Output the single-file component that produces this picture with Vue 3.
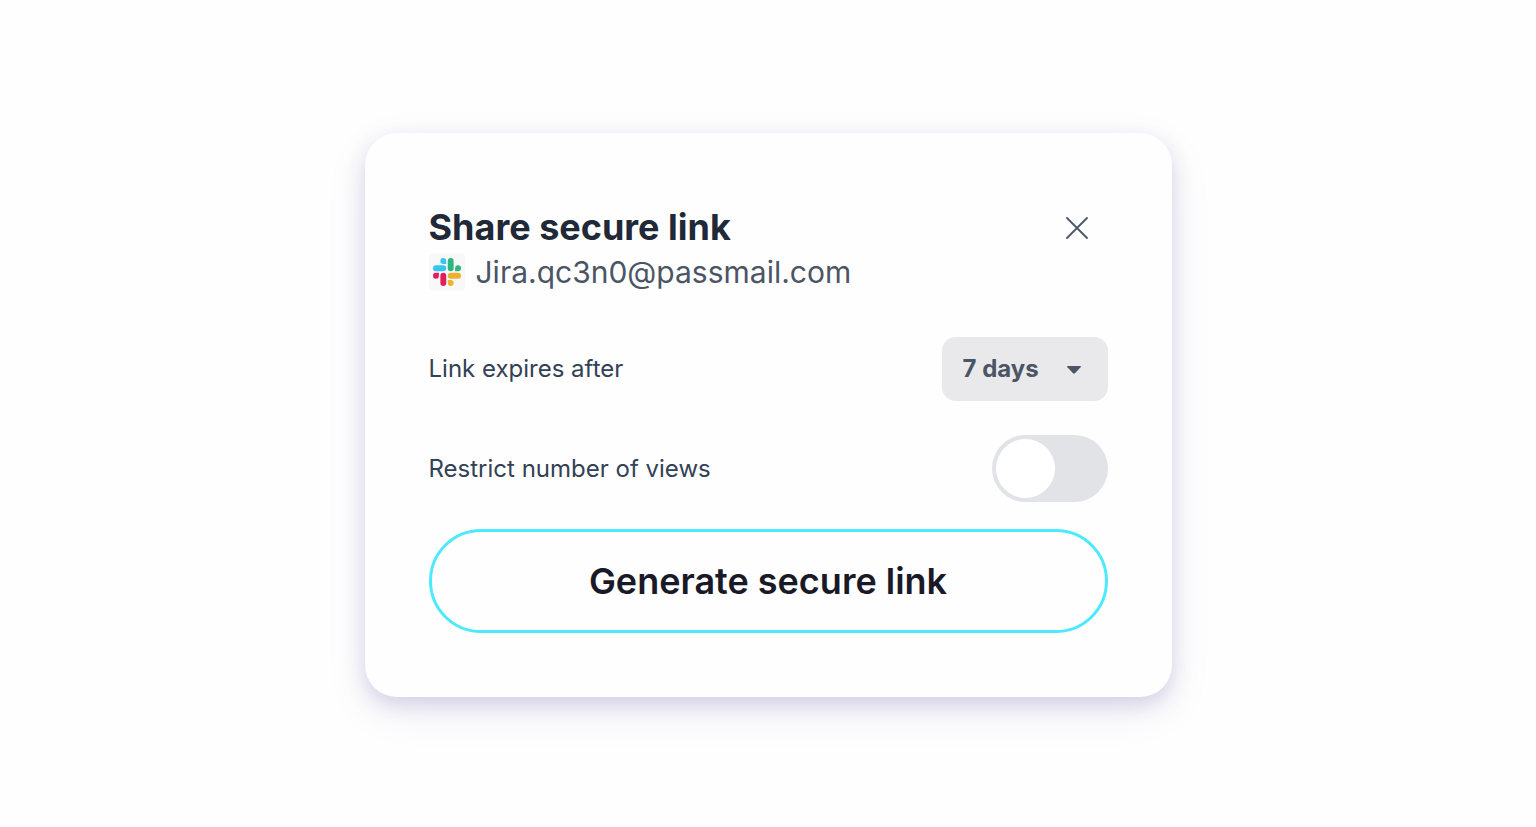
<script setup>
import { ref } from 'vue'
const expiry = ref('7 days')
const restricted = ref(false)
</script>

<template>
  <main class="page">
    <section class="card" aria-labelledby="title">
      <header class="head">
        <div>
          <h1 id="title">Share secure link</h1>
          <p class="account">
            <span class="logo">
              <svg viewBox="0 0 122.8 122.8" width="28" height="28" aria-hidden="true">
                <path fill="#e01e5a" d="M25.8 77.6a12.9 12.9 0 1 1-12.9-12.9h12.9zm6.5 0a12.9 12.9 0 0 1 25.8 0v32.3a12.9 12.9 0 0 1-25.8 0z" />
                <path fill="#36c5f0" d="M45.2 25.8a12.9 12.9 0 1 1 12.9-12.9v12.9zm0 6.5a12.9 12.9 0 0 1 0 25.8H12.9a12.9 12.9 0 0 1 0-25.8z" />
                <path fill="#2eb67d" d="M97 45.2a12.9 12.9 0 1 1 12.9 12.9H97zm-6.5 0a12.9 12.9 0 0 1-25.8 0V12.9a12.9 12.9 0 0 1 25.8 0z" />
                <path fill="#ecb22e" d="M77.6 97a12.9 12.9 0 1 1-12.9 12.9V97zm0-6.5a12.9 12.9 0 0 1 0-25.8h32.3a12.9 12.9 0 0 1 0 25.8z" />
              </svg>
            </span>
            <span>Jira.qc3n0@passmail.com</span>
          </p>
        </div>
        <button class="close" type="button" aria-label="Close">
          <svg viewBox="0 0 22 22" width="22" height="22" aria-hidden="true">
            <path d="M1 1 21 21M21 1 1 21" fill="none" stroke="#4b5565" stroke-width="1.8" stroke-linecap="round" />
          </svg>
        </button>
      </header>

      <div class="row expiry">
        <label for="expiry">Link expires after</label>
        <div class="picker">
          <select id="expiry" v-model="expiry">
            <option>7 days</option>
          </select>
          <svg class="caret" viewBox="0 0 14 8" width="14" height="8" aria-hidden="true">
            <path d="M.8 0h12.4q1.2.3.4 1.2L8.2 7q-1.2 1.1-2.4 0L.4 1.2Q-.4.3.8 0z" fill="#4b5565" />
          </svg>
        </div>
      </div>

      <div class="row views">
        <label for="restrict">Restrict number of views</label>
        <input id="restrict" v-model="restricted" class="toggle" type="checkbox" role="switch" />
      </div>

      <button class="generate" type="button">Generate secure link</button>
    </section>
  </main>
</template>

<style>
body {
  background: #fefefe;
}
</style>

<style scoped>
.page {
  box-sizing: border-box;
  min-height: 100vh;
  padding: 16px 16px 13px;
  display: flex;
  align-items: center;
  justify-content: center;
  font-family: Inter, "Liberation Sans", sans-serif;
  color: #334155;
}
.card {
  box-sizing: border-box;
  width: 100%;
  max-width: 807px;
  padding: 72px 64px 64px;
  border-radius: 32px;
  background: #fefefe;
  box-shadow: 0 8px 20px rgba(60, 45, 140, 0.17), 0 14px 44px rgba(60, 45, 140, 0.08);
}
.head {
  display: flex;
  justify-content: space-between;
  align-items: flex-start;
}
h1 {
  margin: 0;
  font-size: 36px;
  line-height: 45px;
  font-weight: 700;
  color: #1f2937;
}
.account {
  margin: 0;
  display: flex;
  align-items: center;
  gap: 11px;
  font-size: 30px;
  line-height: 44px;
  color: #4b5565;
}
.logo {
  display: grid;
  place-items: center;
  width: 36px;
  height: 36px;
  border-radius: 3px;
  background: #f8f8f8;
}
.close {
  display: grid;
  place-items: center;
  width: 44px;
  height: 45px;
  margin-right: 9px;
  padding: 0;
  border: 0;
  background: none;
}
.row {
  display: flex;
  align-items: center;
  justify-content: space-between;
  font-size: 24px;
  line-height: 32px;
}
.expiry {
  margin-top: 43px;
}
.picker {
  position: relative;
}
select {
  appearance: none;
  width: 166px;
  height: 64px;
  padding: 0 60px 0 21px;
  border: 0;
  border-radius: 14px;
  background: #e9e9eb;
  font: 700 24px/32px Inter, "Liberation Sans", sans-serif;
  color: #4b5565;
}
.caret {
  position: absolute;
  right: 27px;
  top: 29px;
  pointer-events: none;
}
.views {
  margin-top: 34px;
}
.toggle {
  appearance: none;
  box-sizing: border-box;
  width: 116px;
  height: 67px;
  margin: 0;
  padding: 4px;
  display: flex;
  border-radius: 34px;
  background: #e2e3e7;
}
.toggle::before {
  content: "";
  width: 59px;
  height: 59px;
  border-radius: 50%;
  background: #fff;
}
.toggle:checked {
  justify-content: flex-end;
  background: #4be7fd;
}
.generate {
  display: block;
  width: 100%;
  height: 104px;
  margin-top: 27px;
  border: 3px solid #4deaff;
  border-radius: 52px;
  background: #fefefe;
  font: 600 36px/44px Inter, "Liberation Sans", sans-serif;
  color: #191927;
}
</style>
